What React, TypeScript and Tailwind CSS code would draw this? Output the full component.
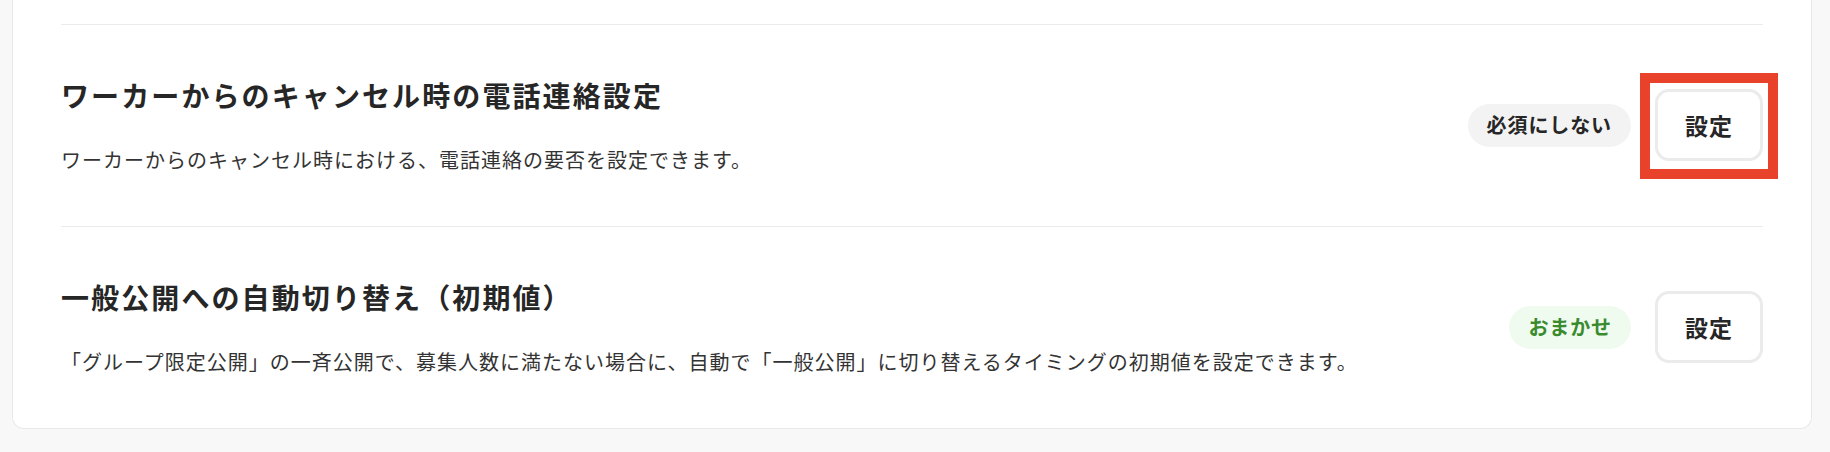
import React from 'react';

type Setting = {
  title: string;
  description: string;
  status: string;
  tone: 'gray' | 'green';
  highlighted?: boolean;
};

const settings: Setting[] = [
  {
    title: 'ワーカーからのキャンセル時の電話連絡設定',
    description: 'ワーカーからのキャンセル時における、電話連絡の要否を設定できます。',
    status: '必須にしない',
    tone: 'gray',
    highlighted: true,
  },
  {
    title: '一般公開への自動切り替え（初期値）',
    description:
      '「グループ限定公開」の一斉公開で、募集人数に満たない場合に、自動で「一般公開」に切り替えるタイミングの初期値を設定できます。',
    status: 'おまかせ',
    tone: 'green',
  },
];

const StatusPill: React.FC<{ label: string; tone: 'gray' | 'green' }> = ({ label, tone }) => {
  const colors = tone === 'green' ? 'bg-[#effbef] text-[#3a8a2e]' : 'bg-[#f3f3f3] text-[#262626]';
  return (
    <span className={`flex h-[43px] items-center rounded-full px-[19px] text-[20px] font-bold tracking-[0.9px] ${colors}`}>
      {label}
    </span>
  );
};

const SettingRow: React.FC<{ setting: Setting }> = ({ setting }) => (
  <div className="flex items-center justify-between border-t border-[#ebebeb] pt-[50px] pb-[51px]">
    <div className="flex flex-col gap-[30px]">
      <h3 className="h-[40px] text-[28px] leading-[40px] font-bold tracking-[2.1px] text-[#262626]">{setting.title}</h3>
      <p className="h-[30px] text-[20px] leading-[30px] tracking-[1px] text-[#333333]">{setting.description}</p>
    </div>
    <div className="flex items-center gap-6">
      <StatusPill label={setting.status} tone={setting.tone} />
      <div className="relative">
        <button className="flex h-[72px] w-[108px] items-center justify-center rounded-[14px] border-[3px] border-[#ebebeb] bg-white text-[23px] font-bold tracking-[1px] text-[#262626]">
          設定
        </button>
        {setting.highlighted && (
          <div className="pointer-events-none absolute -top-[16px] -right-[15px] -bottom-[18px] -left-[15px] border-[10px] border-[#e8422a]" />
        )}
      </div>
    </div>
  </div>
);

export default function App() {
  return (
    <div
      className="min-h-[452px] w-full bg-[#f8f8f8] pr-[18px] pb-[23px] pl-[12px]"
      style={{ fontFamily: '"Noto Sans CJK JP", "Noto Sans", sans-serif' }}
    >
      <div className="rounded-b-[12px] border-x border-b border-[#e8e8e8] bg-white px-12 pt-6">
        {settings.map((s) => (
          <SettingRow key={s.title} setting={s} />
        ))}
      </div>
    </div>
  );
}
